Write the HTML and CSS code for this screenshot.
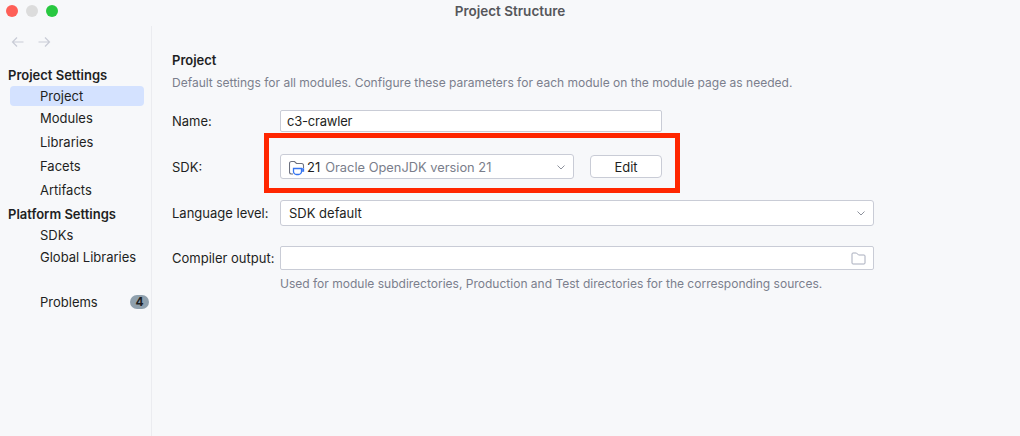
FILE: index.html
```html
<!DOCTYPE html>
<html lang="en">

<head>
    <meta charset="UTF-8">
    <title>Project Structure</title>
    <link rel="stylesheet" href="styles.css">
</head>

<body>
    <div class="window">
        <header class="titlebar">
            <div class="lights">
                <span class="light red"></span>
                <span class="light grey"></span>
                <span class="light green"></span>
            </div>
            <div class="title">Project Structure</div>
        </header>

        <div class="main">
            <nav class="sidebar">
                <div class="arrows">
                    <svg width="16" height="12" viewBox="0 0 16 12"><path d="M13.5 6H2.5M7 1.5 2.5 6 7 10.5" /></svg>
                    <svg width="16" height="12" viewBox="0 0 16 12"><path d="M2.5 6h11M9 1.5 13.5 6 9 10.5" /></svg>
                </div>
                <div class="nav-head first">Project Settings</div>
                <div class="nav-item selected">Project</div>
                <div class="nav-item">Modules</div>
                <div class="nav-item">Libraries</div>
                <div class="nav-item">Facets</div>
                <div class="nav-item">Artifacts</div>
                <div class="nav-head">Platform Settings</div>
                <div class="nav-item tight">SDKs</div>
                <div class="nav-item tight">Global Libraries</div>
                <div class="nav-item problems">
                    <span>Problems</span>
                    <span class="badge">4</span>
                </div>
            </nav>

            <section class="content">
                <h1>Project</h1>
                <p class="desc">Default settings for all modules. Configure these parameters for each module on the module page as needed.</p>

                <div class="form">
                    <div class="row name-row">
                        <label>Name:</label>
                        <div class="field name-field">c3-crawler</div>
                    </div>

                    <div class="row sdk-row">
                        <label>SDK:</label>
                        <div class="field combo sdk-combo">
                            <svg class="sdk-icon" width="16" height="17" viewBox="0 0 16 17">
                                <path class="folder" d="M4 15H2.5a2 2 0 0 1-2-2V4.5a2 2 0 0 1 2-2h3l2 2h5a2 2 0 0 1 2 2V9" />
                                <path class="cup" d="M4.5 9.5h8v3a3 3 0 0 1-3 3h-2a3 3 0 0 1-3-3zM12.5 10h2v2h-2" />
                            </svg>
                            <span class="sdk-num">21</span>
                            <span class="sdk-name">Oracle OpenJDK version 21</span>
                            <svg class="chevron" width="8" height="5" viewBox="0 0 8 5"><path d="M.5.5 4 4 7.500.5" /></svg>
                        </div>
                        <button class="edit-btn">Edit</button>
                    </div>

                    <div class="row lang-row">
                        <label>Language level:</label>
                        <div class="field combo wide">
                            <span>SDK default</span>
                            <svg class="chevron" width="8" height="5" viewBox="0 0 8 5"><path d="M.5.5 4 4 7.500.5" /></svg>
                        </div>
                    </div>

                    <div class="row output-row">
                        <label>Compiler output:</label>
                        <div class="field wide output-field">
                            <svg class="folder-btn" width="15" height="13" viewBox="0 0 15 13"><path d="M1 11V2a1 1 0 0 1 1-1h3.5l2 2H13a1 1 0 0 1 1 1v7a1 1 0 0 1-1 1H2a1 1 0 0 1-1-1z" /></svg>
                        </div>
                    </div>

                    <div class="hint">Used for module subdirectories, Production and Test directories for the corresponding sources.</div>
                </div>

                <div class="highlight"></div>
            </section>
        </div>
    </div>
</body>

</html>
```

FILE: styles.css
```css
html,
body {
    margin: 0;
    padding: 0;
}

body {
    width: 1020px;
    height: 436px;
    overflow: hidden;
    background-color: #f7f8fa;
    font-family: 'Inter', 'Liberation Sans', sans-serif;
    font-size: 13px;
    color: #1e1f22;
}

.window {
    display: flex;
    flex-direction: column;
    height: 436px;
}

/* Title bar */
.titlebar {
    position: relative;
    height: 26px;
    flex: none;
    display: flex;
    align-items: center;
    justify-content: center;
}

.lights {
    position: absolute;
    left: 6px;
    top: 5px;
    display: flex;
    gap: 8px;
}

.light {
    width: 12px;
    height: 12px;
    border-radius: 50%;
}

.light.red { background-color: #fe5f57; }
.light.grey { background-color: #dcdcdc; }
.light.green { background-color: #28c840; }

.title {
    font-weight: 600;
    font-size: 13.5px;
    color: #55565a;
    margin-top: -5px;
}

.main {
    flex: 1;
    display: flex;
    min-height: 0;
}

/* Sidebar */
.sidebar {
    width: 152px;
    flex: none;
    box-sizing: border-box;
    border-right: 1px solid #ebecf0;
    padding: 0 7px 0 8px;
}

.arrows {
    display: flex;
    gap: 10px;
    padding: 10px 0 0 2px;
    height: 22px;
}

.arrows path {
    fill: none;
    stroke: #c9ccd6;
    stroke-width: 1.2;
}

.nav-head {
    font-weight: 600;
    height: 22px;
    line-height: 22px;
    margin-bottom: -1px;
}

.nav-head.first {
    margin-top: 6px;
    margin-bottom: 0;
}

.nav-item {
    height: 22px;
    line-height: 22px;
    margin: 0 0 2px 2px;
    padding-left: 30px;
    border-radius: 4px;
}

.nav-item.selected {
    background-color: #d4e2ff;
    height: 20px;
    line-height: 20px;
    margin-bottom: 1px;
}

.nav-item.tight {
    margin-bottom: 0;
}

.problems {
    display: flex;
    justify-content: space-between;
    align-items: center;
    margin-top: 23px;
    margin-right: -5px;
}

.badge {
    width: 19px;
    height: 14px;
    border-radius: 7px;
    background-color: #8fa0ad;
    font-size: 12px;
    font-weight: 700;
    line-height: 14px;
    text-align: center;
}

/* Form */
.content {
    position: relative;
    flex: 1;
    padding: 0 0 0 20px;
}

h1 {
    font-size: 13px;
    font-weight: 600;
    line-height: 16px;
    margin: 26px 0 0;
}

.desc {
    font-size: 12.02px;
    color: #7b7f8d;
    line-height: 16px;
    margin: 7px 0 0;
}

.form {
    margin-top: 19px;
}

.row {
    display: flex;
    align-items: center;
}

.row label {
    width: 108px;
    flex: none;
}

.name-row {
    height: 22px;
    margin-bottom: 22px;
}

.sdk-row {
    height: 25px;
    margin-bottom: 21px;
}

.lang-row {
    height: 26px;
    margin-bottom: 20px;
}

.lang-row label {
    margin-top: -1px;
}

.output-row {
    height: 24px;
    margin-bottom: 6px;
}

.field {
    box-sizing: border-box;
    height: 100%;
    background-color: #fff;
    border: 1px solid #c9ccd6;
    border-radius: 2px;
    padding: 0 6px;
    display: flex;
    align-items: center;
}

.name-field {
    width: 382px;
    letter-spacing: -0.2px;
}

.wide {
    width: 594px;
}

.combo {
    border-radius: 3px;
    padding: 0 0 0 8px;
}

.sdk-combo {
    width: 294px;
    padding-top: 1px;
}

.sdk-icon {
    flex: none;
    margin-right: 2px;
}

.sdk-icon path {
    fill: none;
    stroke-width: 1.1;
}

.sdk-icon .folder { stroke: #6c707e; }
.sdk-icon .cup { stroke: #3574f0; stroke-width: 1.3; fill: #fff; }

.sdk-num {
    margin-right: 5px;
}

.sdk-name {
    color: #7a7e8b;
    font-size: 12.85px;
}

.chevron {
    margin-left: auto;
    margin-right: 8px;
}

.chevron path {
    fill: none;
    stroke: #8d919c;
    stroke-width: 1;
}

.edit-btn {
    width: 72px;
    height: 23px;
    margin-left: 16px;
    box-sizing: border-box;
    background-color: #fff;
    border: 1px solid #c9ccd6;
    border-radius: 4px;
    font-family: inherit;
    font-size: 13px;
    color: #1e1f22;
    padding: 0;
}

.output-field {
    justify-content: flex-end;
    padding-right: 7px;
}

.folder-btn path {
    fill: none;
    stroke: #a8adbd;
    stroke-width: 1;
}

.hint {
    margin-left: 108px;
    font-size: 12.02px;
    color: #7b7f8d;
    line-height: 16px;
}

/* Red annotation drawn over the screenshot */
.highlight {
    position: absolute;
    left: 112px;
    top: 107px;
    width: 416px;
    height: 60px;
    box-sizing: border-box;
    border: 5px solid #ff2600;
}
```
